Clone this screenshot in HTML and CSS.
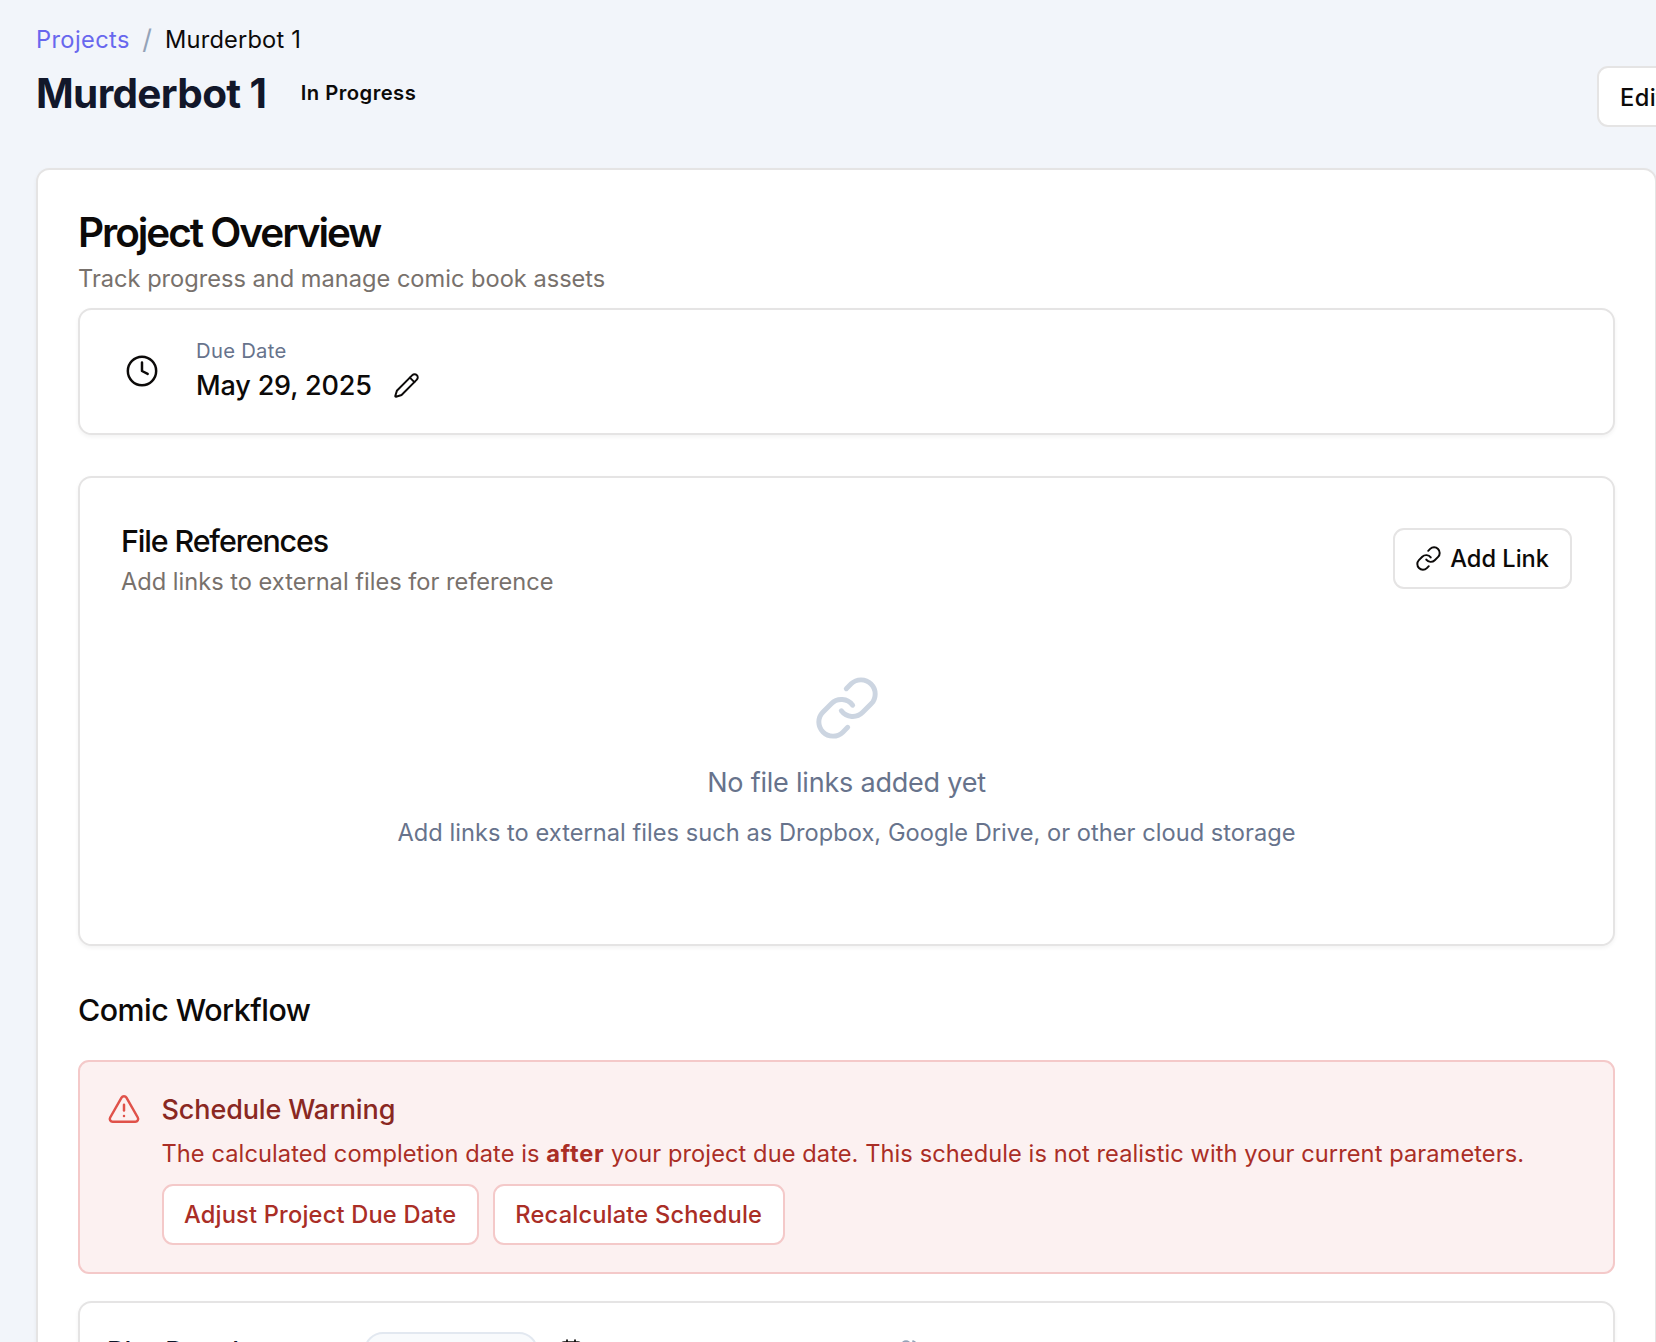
FILE: index.html
```html
<!DOCTYPE html>
<html lang="en">
<head>
<meta charset="utf-8">
<title>Murderbot 1</title>
<link rel="stylesheet" href="styles.css">
</head>
<body>
<svg class="sprite" aria-hidden="true">
  <symbol id="link" viewBox="0 0 24 24"><path d="M10 13a5 5 0 0 0 7.54.54l3-3a5 5 0 0 0-7.07-7.07l-1.72 1.71"/><path d="M14 11a5 5 0 0 0-7.54-.54l-3 3a5 5 0 0 0 7.07 7.07l1.71-1.71"/></symbol>
</svg>
<main class="page">
  <nav class="breadcrumb">
    <a class="crumb-link">Projects</a>
    <span class="crumb-sep">/</span>
    <span class="crumb-current">Murderbot 1</span>
  </nav>
  <header class="page-header">
    <div class="heading">
      <h1 class="page-title">Murderbot 1</h1>
      <span class="status">In Progress</span>
    </div>
    <button class="button edit">Edit Project</button>
  </header>

  <section class="card overview">
    <h2 class="overview-title">Project Overview</h2>
    <p class="description overview-description">Track progress and manage comic book assets</p>

    <div class="card due">
      <svg class="icon icon-md due-icon" viewBox="0 0 24 24"><circle cx="12" cy="12" r="10"/><path d="M12 6v6l4 2"/></svg>
      <div>
        <p class="due-label">Due Date</p>
        <div class="due-row">
          <p class="due-value">May 29, 2025</p>
          <svg class="icon icon-sm" viewBox="0 0 24 24"><path d="M21.174 6.812a1 1 0 0 0-3.986-3.987L3.842 16.174a2 2 0 0 0-.5.83l-1.321 4.352a.5.5 0 0 0 .623.622l4.353-1.32a2 2 0 0 0 .83-.497z"/><path d="m15 5 4 4"/></svg>
        </div>
      </div>
    </div>

    <section class="card files">
      <div class="files-header">
        <div>
          <h3 class="files-title">File References</h3>
          <p class="description files-description">Add links to external files for reference</p>
        </div>
        <button class="button add-link"><svg class="icon icon-sm"><use href="#link"/></svg><span>Add Link</span></button>
      </div>
      <div class="empty">
        <svg class="icon icon-lg"><use href="#link"/></svg>
        <p class="empty-title">No file links added yet</p>
        <p class="empty-text">Add links to external files such as Dropbox, Google Drive, or other cloud storage</p>
      </div>
    </section>

    <h3 class="workflow-title">Comic Workflow</h3>

    <div class="alert">
      <svg class="icon icon-md alert-icon" viewBox="0 0 24 24"><path d="m21.73 18-8-14a2 2 0 0 0-3.48 0l-8 14A2 2 0 0 0 4 21h16a2 2 0 0 0 1.73-3"/><path d="M12 9v4"/><path d="M12 17h.01"/></svg>
      <div>
        <h4 class="alert-title">Schedule Warning</h4>
        <p class="alert-text">The calculated completion date is <strong>after</strong> your project due date. This schedule is not realistic with your current parameters.</p>
        <div class="alert-actions">
          <button class="button button-danger">Adjust Project Due Date</button>
          <button class="button button-danger">Recalculate Schedule</button>
        </div>
      </div>
    </div>

    <div class="card stage">
      <h4 class="stage-title">Plot Development</h4>
      <span class="stage-badge"></span>
      <svg class="icon icon-xs stage-date" viewBox="0 0 24 24"><path d="M8 2v4"/><path d="M16 2v4"/><rect width="18" height="18" x="3" y="4" rx="2"/><path d="M3 10h18"/></svg>
      <svg class="icon icon-xs stage-people" viewBox="0 0 24 24"><path d="M16 21v-2a4 4 0 0 0-4-4H6a4 4 0 0 0-4 4v2"/><circle cx="9" cy="7" r="4"/><path d="M22 21v-2a4 4 0 0 0-3-3.87"/><path d="M16 3.13a4 4 0 0 1 0 7.75"/></svg>
    </div>
  </section>
</main>
</body>
</html>
```
FILE: styles.css
```css
* { box-sizing: border-box; margin: 0; }

html, body { height: 100%; }

body {
  overflow: hidden;
  background: #f2f5fa;
  color: #0c0a09;
  font-family: Inter, "Liberation Sans", sans-serif;
  font-size: 23.625px;
  line-height: 34px;
}

.sprite { display: none; }

.page { width: 1657px; padding: 23px 0 0 36px; }

.breadcrumb { display: flex; align-items: center; height: 34px; white-space: nowrap; }
.crumb-link { color: #6867ee; letter-spacing: 0.4px; }
.crumb-sep { color: #94a3b8; font-size: 27px; margin: 0 13px 0 12.5px; }
.crumb-current { letter-spacing: 0.18px; }

.page-header {
  display: grid;
  grid-template-columns: 1561px max-content;
  align-items: start;
  margin-top: 9px;
}
.heading { display: flex; align-items: center; gap: 34.5px; padding-top: 5px; }
.page-title {
  color: #12172a;
  font-size: 40.5px;
  font-weight: 700;
  line-height: 46px;
  letter-spacing: -0.66px;
}
.status { padding-bottom: 2px; font-size: 20.25px; font-weight: 600; line-height: 28px; letter-spacing: 0.45px; }

.button {
  display: flex;
  align-items: center;
  gap: 8px;
  height: 61px;
  padding: 0 20.5px;
  border: 2px solid #e5e4e4;
  border-radius: 11px;
  background: #fff;
  color: inherit;
  font: inherit;
  font-weight: 500;
  white-space: nowrap;
}
.edit { padding: 2px 21px 0; letter-spacing: 0.4px; }

.icon {
  flex: none;
  fill: none;
  stroke: currentColor;
  stroke-width: 1.75;
  stroke-linecap: round;
  stroke-linejoin: round;
}
.icon-xs { width: 24px; height: 24px; }
.icon-sm { width: 27px; height: 27px; }
.icon-md { width: 34px; height: 34px; }
.icon-lg { width: 68px; height: 68px; color: #ccd5e1; }

.card {
  border: 2px solid #e5e4e4;
  border-radius: 13.5px;
  background: #fff;
  box-shadow: 0 2px 4px rgba(0, 0, 0, 0.05);
}

.overview { height: 1400px; margin-top: 41px; padding: 41px 40px; }
.overview-title {
  font-size: 40.5px;
  font-weight: 600;
  line-height: 44px;
  letter-spacing: -2.05px;
}
.description { color: #78716c; }
.overview-description { margin-top: 7px; }

.due { display: flex; align-items: center; gap: 37px; height: 127px; margin-top: 12px; padding: 0 45px; }
.due-icon { margin-bottom: 2px; }
.due-label { color: #67738c; font-size: 20.25px; line-height: 28px; letter-spacing: 0.27px; }
.due-row { display: flex; align-items: center; gap: 21px; height: 41px; }
.due-value { font-size: 27px; font-weight: 500; letter-spacing: -0.16px; }

.files { height: 470px; margin-top: 41px; padding: 47px 41px 0; }
.files-header { display: flex; justify-content: space-between; align-items: flex-start; }
.files-title { font-size: 30.375px; font-weight: 500; line-height: 32px; letter-spacing: -1.12px; }
.files-description { margin-top: 8px; }
.add-link { margin-top: 3px; padding: 0 21px 0 20px; }

.empty { display: flex; flex-direction: column; align-items: center; padding-top: 75px; color: #67738c; }
.empty-title { margin-top: 21px; font-size: 27px; line-height: 40px; letter-spacing: -0.21px; }
.empty-text { margin-top: 13px; letter-spacing: 0.04px; }

.workflow-title {
  margin-top: 40px;
  font-size: 30.375px;
  font-weight: 500;
  line-height: 48px;
  letter-spacing: -0.5px;
}

.alert {
  display: flex;
  align-items: flex-start;
  gap: 20.5px;
  height: 214px;
  margin-top: 26px;
  padding: 27px;
  border: 2px solid #f4c9c9;
  border-radius: 11px;
  background: #fcf1f1;
  color: #aa2e26;
}
.alert-icon { margin-top: 3px; color: #e0524a; }
.alert-title { margin-top: 1px; color: #8a2822; font-size: 27px; font-weight: 500; line-height: 40px; letter-spacing: -0.12px; }
.alert-text { margin-top: 7px; letter-spacing: 0.085px; white-space: nowrap; }
.alert-text strong { font-weight: 700; letter-spacing: 0.75px; }
.alert-actions { display: flex; gap: 14px; margin-top: 13px; }
.button-danger { border-color: #f4c9c9; letter-spacing: 0.2px; }

.stage { display: flex; align-items: center; height: 120px; margin-top: 27px; padding: 0 27px 20px; }
.stage-title {
  width: 257px;
  padding-top: 2px;
  color: #0f172a;
  font-size: 27px;
  font-weight: 500;
  letter-spacing: 0.3px;
}
.stage-badge { width: 174px; height: 38px; border: 2px solid #e2e8f0; border-radius: 19px; background: #f8fafc; }
.stage-date { margin: 0 0 3px 21px; }
.stage-people { margin: 0 0 3px 314px; color: #94a3b8; }
```
